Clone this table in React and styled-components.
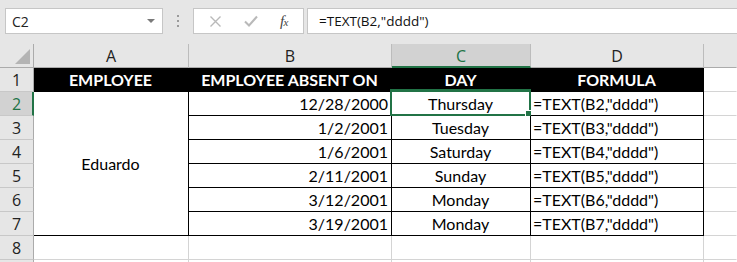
import React from "react";
import styled, { createGlobalStyle } from "styled-components";

const Global = createGlobalStyle`
  html, body { margin: 0; padding: 0; background: #fff; overflow: hidden; }
  * { box-sizing: border-box; }
`;

const Window = styled.div`
  width: 737px;
  height: 262px;
  overflow: hidden;
  background: #fff;
`;

const TopBar = styled.div`
  height: 44px;
  background: #e6e6e6;
  display: flex;
  align-items: flex-start;
  padding: 8px 0 0 5px;
  font-family: "Open Sans", "Noto Sans", sans-serif;
`;

const NameBox = styled.div`
  width: 158px;
  height: 26px;
  background: #fff;
  border: 1px solid #c6c6c6;
  display: flex;
  align-items: center;
  justify-content: space-between;
  padding: 0 6px 0 6px;
  font-size: 14px;
  color: #222;
`;

const Caret = styled.span`
  width: 0;
  height: 0;
  border-left: 4px solid transparent;
  border-right: 4px solid transparent;
  border-top: 4px solid #7a7a7a;
  margin-right: 1px;
`;

const Grip = styled.div`
  width: 30px;
  height: 26px;
  display: flex;
  flex-direction: column;
  align-items: center;
  justify-content: center;
  gap: 3px;
  & > span {
    width: 2px;
    height: 2px;
    background: #9a9a9a;
  }
`;

const Buttons = styled.div`
  width: 111px;
  height: 26px;
  background: #fff;
  border: 1px solid #c6c6c6;
  display: flex;
  align-items: center;
  justify-content: space-around;
  padding: 0 4px;
`;

const Fx = styled.span`
  font-family: "Liberation Serif", serif;
  font-style: italic;
  font-size: 15px;
  color: #444;
  letter-spacing: -0.5px;
  & > small { font-size: 11px; }
`;

const FormulaInput = styled.div`
  flex: 1;
  height: 26px;
  margin-left: 3px;
  background: #fff;
  border: 1px solid #c6c6c6;
  border-right: none;
  display: flex;
  align-items: center;
  padding-left: 11px;
  font-size: 13.5px;
  color: #111;
`;

const Sheet = styled.div`
  display: grid;
  grid-template-columns: 34px 155px 203px 139px 173px 1fr;
  grid-auto-rows: 24px;
  font-family: "Lato", "Liberation Sans", sans-serif;
  font-size: 16px;
`;

const Corner = styled.div`
  background: #e6e6e6;
  border-right: 1px solid #ababab;
  border-bottom: 1px solid #ababab;
  position: relative;
  &::after {
    content: "";
    position: absolute;
    right: 3px;
    bottom: 3px;
    width: 0;
    height: 0;
    border-left: 15px solid transparent;
    border-bottom: 15px solid #b4b4b4;
  }
`;

const ColHead = styled.div`
  background: ${(p) => (p.$sel ? "#d2d2d2" : "#e6e6e6")};
  color: ${(p) => (p.$sel ? "#217346" : "#222")};
  border-right: 1px solid ${(p) => (p.$last ? "transparent" : "#bcbcbc")};
  border-bottom: ${(p) => (p.$sel ? "2px solid #217346" : "1px solid #ababab")};
  display: flex;
  align-items: center;
  justify-content: center;
  font-family: "Open Sans", "Noto Sans", sans-serif;
  font-size: 16px;
  padding-top: ${(p) => (p.$sel ? "1px" : "0")};
`;

const RowHead = styled.div`
  background: ${(p) => (p.$sel ? "#d2d2d2" : "#e6e6e6")};
  color: ${(p) => (p.$sel ? "#217346" : "#222")};
  border-right: ${(p) => (p.$sel ? "2px solid #217346" : "1px solid #ababab")};
  border-bottom: 1px solid #c8c8c8;
  display: flex;
  align-items: center;
  justify-content: center;
  font-family: "Open Sans", "Noto Sans", sans-serif;
  font-size: 16px;
  padding-left: ${(p) => (p.$sel ? "1px" : "0")};
`;

const Cell = styled.div`
  position: relative;
  display: flex;
  align-items: center;
  justify-content: ${(p) =>
    p.$align === "right" ? "flex-end" : p.$align === "left" ? "flex-start" : "center"};
  padding: 0 3px 0 2px;
  white-space: nowrap;
  color: ${(p) => (p.$head ? "#fff" : "#000")};
  background: ${(p) => (p.$head ? "#000" : "#fff")};
  font-weight: ${(p) => (p.$head ? 700 : 400)};
  border-right: 1px solid ${(p) => (p.$table ? "#000" : p.$noRight ? "transparent" : "#d4d4d4")};
  border-bottom: 1px solid ${(p) => (p.$table ? "#000" : "#d4d4d4")};
  grid-row: ${(p) => (p.$span ? `span ${p.$span}` : "auto")};
`;

const Selection = styled.div`
  position: absolute;
  left: -2px;
  top: -3px;
  right: -1px;
  bottom: -1px;
  border: 2px solid #217346;
  border-top-width: 3px;
  pointer-events: none;
  &::after {
    content: "";
    position: absolute;
    right: -4px;
    bottom: -4px;
    width: 6px;
    height: 6px;
    background: #217346;
    border: 1px solid #fff;
  }
`;

const rows = [
  ["12/28/2000", "Thursday", '=TEXT(B2,"dddd")'],
  ["1/2/2001", "Tuesday", '=TEXT(B3,"dddd")'],
  ["1/6/2001", "Saturday", '=TEXT(B4,"dddd")'],
  ["2/11/2001", "Sunday", '=TEXT(B5,"dddd")'],
  ["3/12/2001", "Monday", '=TEXT(B6,"dddd")'],
  ["3/19/2001", "Monday", '=TEXT(B7,"dddd")'],
];

const XIcon = () => (
  <svg width="13" height="13" viewBox="0 0 13 13">
    <path d="M1.5 1.5 L11.5 11.5 M11.5 1.5 L1.5 11.5" stroke="#b9b9b9" strokeWidth="1.4" fill="none" />
  </svg>
);

const CheckIcon = () => (
  <svg width="14" height="12" viewBox="0 0 14 12">
    <path d="M1 6.5 L5 10.5 L13 1.5" stroke="#b9b9b9" strokeWidth="2" fill="none" />
  </svg>
);

export default function App() {
  return (
    <Window>
      <Global />
      <TopBar>
        <NameBox>
          <span>C2</span>
          <Caret />
        </NameBox>
        <Grip>
          <span />
          <span />
          <span />
        </Grip>
        <Buttons>
          <XIcon />
          <CheckIcon />
          <Fx>
            f<small>x</small>
          </Fx>
        </Buttons>
        <FormulaInput>=TEXT(B2,"dddd")</FormulaInput>
      </TopBar>
      <Sheet>
        <Corner />
        <ColHead>A</ColHead>
        <ColHead>B</ColHead>
        <ColHead $sel>C</ColHead>
        <ColHead>D</ColHead>
        <ColHead $last />

        <RowHead>1</RowHead>
        <Cell $head $table>EMPLOYEE</Cell>
        <Cell $head $table>EMPLOYEE ABSENT ON</Cell>
        <Cell $head $table>DAY</Cell>
        <Cell $head $table>FORMULA</Cell>
        <Cell $noRight />

        {rows.map((r, i) => (
          <React.Fragment key={i}>
            <RowHead $sel={i === 0}>{i + 2}</RowHead>
            {i === 0 && (
              <Cell $table $span={6}>
                Eduardo
              </Cell>
            )}
            <Cell $table $align="right">{r[0]}</Cell>
            <Cell $table>
              {r[1]}
              {i === 0 && <Selection />}
            </Cell>
            <Cell $table $align="left">{r[2]}</Cell>
            <Cell $noRight />
          </React.Fragment>
        ))}

        {["8", ""].map((n) => (
          <React.Fragment key={n || "x"}>
            <RowHead>{n}</RowHead>
            <Cell />
            <Cell />
            <Cell />
            <Cell />
            <Cell $noRight />
          </React.Fragment>
        ))}
      </Sheet>
    </Window>
  );
}
